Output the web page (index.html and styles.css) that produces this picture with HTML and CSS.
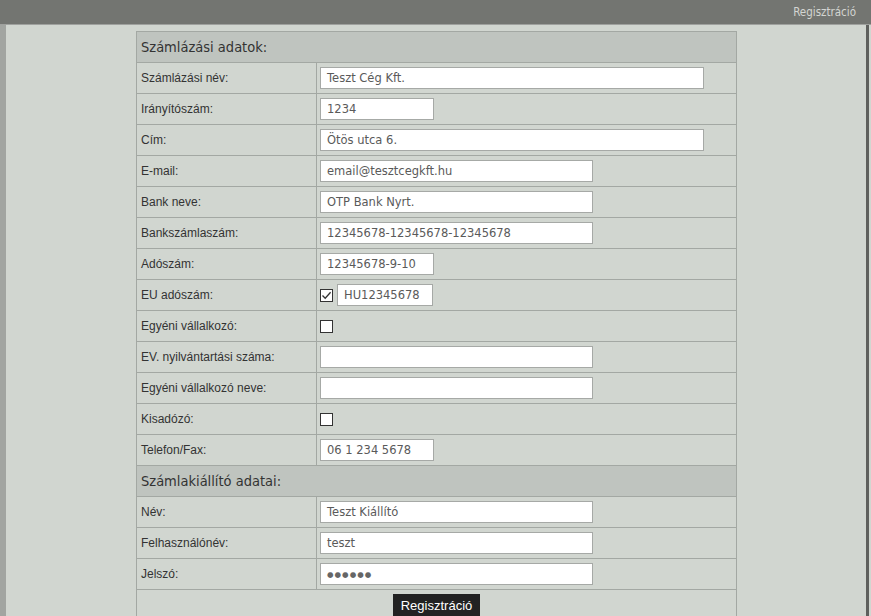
FILE: index.html
```html
<!DOCTYPE html>
<html lang="hu">
<head>
<meta charset="utf-8">
<title>Regisztráció</title>
<link rel="stylesheet" href="styles.css">
</head>
<body>
<div class="topbar"><span class="toplink">Regisztráció</span></div>
<div class="main">
  <table class="form">
    <tr class="head"><td colspan="2">Számlázási adatok:</td></tr>
    <tr><td class="lbl">Számlázási név:</td><td class="fld"><span class="inp long">Teszt Cég Kft.</span></td></tr>
    <tr><td class="lbl">Irányítószám:</td><td class="fld"><span class="inp short">1234</span></td></tr>
    <tr><td class="lbl">Cím:</td><td class="fld"><span class="inp long">Ötös utca 6.</span></td></tr>
    <tr><td class="lbl">E-mail:</td><td class="fld"><span class="inp mid">email@tesztcegkft.hu</span></td></tr>
    <tr><td class="lbl">Bank neve:</td><td class="fld"><span class="inp mid">OTP Bank Nyrt.</span></td></tr>
    <tr><td class="lbl">Bankszámlaszám:</td><td class="fld"><span class="inp mid">12345678-12345678-12345678</span></td></tr>
    <tr><td class="lbl">Adószám:</td><td class="fld"><span class="inp short">12345678-9-10</span></td></tr>
    <tr><td class="lbl">EU adószám:</td><td class="fld"><div class="pair"><span class="chk on"><svg viewBox="0 0 11 11" width="11" height="11"><path d="M1.5 5.5 L4.2 8.3 L9.6 2.2" fill="none" stroke="#333" stroke-width="1.3"/></svg></span><span class="inp eu">HU12345678</span></div></td></tr>
    <tr><td class="lbl">Egyéni vállalkozó:</td><td class="fld"><span class="chk"></span></td></tr>
    <tr><td class="lbl">EV. nyilvántartási száma:</td><td class="fld"><span class="inp mid"></span></td></tr>
    <tr><td class="lbl">Egyéni vállalkozó neve:</td><td class="fld"><span class="inp mid"></span></td></tr>
    <tr><td class="lbl">Kisadózó:</td><td class="fld"><span class="chk"></span></td></tr>
    <tr><td class="lbl">Telefon/Fax:</td><td class="fld"><span class="inp short">06 1 234 5678</span></td></tr>
    <tr class="head"><td colspan="2">Számlakiállító adatai:</td></tr>
    <tr><td class="lbl">Név:</td><td class="fld"><span class="inp mid">Teszt Kiállító</span></td></tr>
    <tr><td class="lbl">Felhasználónév:</td><td class="fld"><span class="inp mid">teszt</span></td></tr>
    <tr><td class="lbl">Jelszó:</td><td class="fld"><span class="inp mid pw">●●●●●●</span></td></tr>
    <tr><td colspan="2" class="btncell"><span class="btn">Regisztráció</span></td></tr>
  </table>
</div>
</body>
</html>
```
FILE: styles.css
```css
html, body {
  margin: 0;
  padding: 0;
  height: 100%;
  overflow: hidden;
}
body {
  background: #d1d6d0;
  font-family: "DejaVu Sans Condensed", "DejaVu Sans", sans-serif;
}
.topbar {
  height: 24px;
  background: #737571;
  border-bottom: 1px solid #9fa19e;
  display: flex;
  justify-content: flex-end;
  align-items: center;
  padding-right: 15px;
}
.toplink {
  color: #d3d5d2;
  font-size: 11.5px;
}
.main {
  height: calc(100% - 25px);
  box-sizing: border-box;
  border-left: 6px solid #a2a5a1;
  border-right: 3px solid #5e605d;
  margin-right: 2px;
  padding-top: 6px;
  padding-left: 130px;
  background: #d1d6d0;
}
.form {
  border-collapse: collapse;
  width: 601px;
  border: 1px solid #a3a8a3;
}
.form td {
  border: 1px solid #a3a8a3;
  height: 31px;
  padding: 0;
  box-sizing: border-box;
}
.head td {
  background: #bfc4bf;
  font-size: 14.5px;
  color: #333;
  padding-left: 4px;
}
.lbl {
  width: 180px;
  font-family: "Liberation Sans", sans-serif;
  font-size: 12px;
  color: #333;
  padding-left: 4px !important;
}
.fld {
  padding-left: 3px !important;
}
.inp {
  display: flex;
  align-items: center;
  height: 22px;
  box-sizing: border-box;
  border: 1px solid #a6a9a6;
  background: #fff;
  font-family: "DejaVu Sans", sans-serif;
  font-size: 11.5px;
  color: #5a5a5a;
  padding-left: 6px;
}
.long { width: 384px; }
.mid { width: 273px; }
.short { width: 114px; }
.eu { width: 96px; }
.pw { font-size: 7.5px; letter-spacing: 1px; color: #666; }
.pair {
  display: flex;
  align-items: center;
  gap: 4px;
}
.chk {
  display: flex;
  align-items: center;
  justify-content: center;
  width: 13px;
  height: 13px;
  box-sizing: border-box;
  border: 1px solid #333;
  background: #fff;
}
.btncell {
  text-align: center;
  vertical-align: top;
}
.btn {
  display: inline-block;
  background: #222;
  color: #fff;
  font-family: "Liberation Sans", sans-serif;
  font-size: 13px;
  padding: 4px 8px 5px;
  margin-top: 4px;
}
```
